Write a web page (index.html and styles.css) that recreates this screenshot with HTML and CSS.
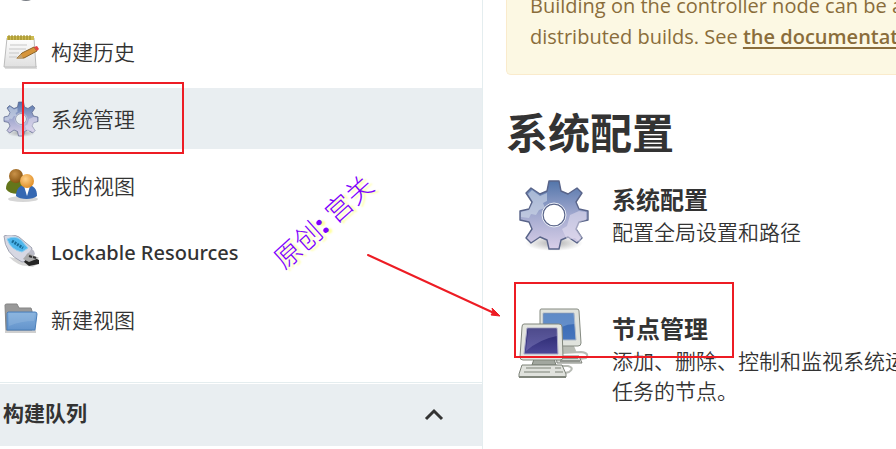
FILE: index.html
```html
<!DOCTYPE html>
<html lang="zh-CN">
<head>
<meta charset="utf-8">
<meta name="viewport" content="width=device-width, initial-scale=1">
<title>系统管理</title>
<link rel="stylesheet" href="styles.css">
</head>
<body>
<svg class="defs" aria-hidden="true">
  <defs>
    <linearGradient id="gearFill" x1="0" y1="0" x2="0" y2="1"><stop offset="0" stop-color="#5275aa"/><stop offset=".5" stop-color="#a2a9cf"/><stop offset="1" stop-color="#d9cfe8"/></linearGradient>
    <linearGradient id="paper" x1="0" y1="0" x2="0" y2="1"><stop offset="0" stop-color="#ffffff"/><stop offset="1" stop-color="#e0e0e0"/></linearGradient>
    <linearGradient id="folderFill" x1="0" y1="0" x2="0" y2="1"><stop offset="0" stop-color="#83b0dd"/><stop offset="1" stop-color="#6494cc"/></linearGradient>
    <linearGradient id="screenDark" x1="0" y1="0" x2="0" y2="1"><stop offset="0" stop-color="#26246a"/><stop offset="1" stop-color="#4b4796"/></linearGradient>
    <linearGradient id="screenBlue" x1="0" y1="0" x2="0" y2="1"><stop offset="0" stop-color="#3567b2"/><stop offset="1" stop-color="#4675bd"/></linearGradient>
    <radialGradient id="brownHead" cx=".4" cy=".35" r=".7"><stop offset="0" stop-color="#c99249"/><stop offset="1" stop-color="#84500e"/></radialGradient>
    <radialGradient id="orangeHead" cx=".4" cy=".35" r=".7"><stop offset="0" stop-color="#ffd28a"/><stop offset="1" stop-color="#df8a20"/></radialGradient>
    <radialGradient id="shade"><stop offset="0" stop-color="#777" stop-opacity=".6"/><stop offset="1" stop-color="#777" stop-opacity="0"/></radialGradient>
    <symbol id="gear" viewBox="0 0 72 72">
      <ellipse cx="36" cy="64" rx="29" ry="8" fill="url(#shade)"/>
      <path d="M31 2h10l2 10 7 3 9-6 5 5-6 9 3 7 9 2v9l-9 2-3 7 6 9-5 5-9-6-7 3-2 9H31l-2-9-7-3-9 6-5-5 6-9-3-7-9-2v-9l9-2 3-7-6-9 5-5 9 6 7-3zM36 25a11 11 0 1 0 0 22 11 11 0 1 0 0-22z" fill="url(#gearFill)" fill-rule="evenodd" stroke="#596489" stroke-width="1.4" stroke-linejoin="round"/>
      <path d="M14 11l8 6 7-3v8l-4 2 2 5-6 2-3 5-5-1-2 4-8-1v-5l8-2 4-8-5-8z" fill="#d1dbea" opacity=".6"/>
      <path d="M68 33l-7-1-9 4-3 11-5 3 5 11 8-2 4 4 3-5-5-7 3-8 6-2z" fill="#e9e4f3" opacity=".5"/>
      <circle cx="36" cy="36" r="12" fill="none" stroke="#e9edf5" stroke-width="1"/>
    </symbol>
  </defs>
</svg>
<div class="layout">
  <aside class="sidebar">
    <nav class="tasks" aria-label="任务">
      <a class="task previous" href="#" aria-label="用户列表"><svg class="icon" viewBox="0 0 36 36"><ellipse cx="23" cy="31" rx="7" ry="3" fill="#777b82"/></svg></a>
      <a class="task" href="#">
        <svg class="icon" viewBox="0 0 36 36"><path d="M2 32h32v3H2z" fill="#aaa" opacity=".4"/><path d="M4 4h27l2 29H1z" fill="url(#paper)" stroke="#bcbcbc"/><path d="M4 2h27v4H4z" fill="#cdbb51"/><path d="M6 1v5m3-5v5m3-5v5m3-5v5m3-5v5m3-5v5m3-5v5m3-5v5" stroke="#958324"/><path d="M7 11h17M6 15h17M6 19h10M6 23h8" stroke="#c7c7c7"/><path d="M14 24l5-5 12-6 3 4-13 7z" fill="#d6953b" stroke="#8b6429"/><path d="M13 25l5-5 2 4z" fill="#c2a06e"/><path d="M31 13l3-1 2 3-2 2z" fill="#e44243"/></svg>
        <span>构建历史</span></a>
      <a class="task active" href="#" aria-current="page"><svg class="icon"><use href="#gear"/></svg><span>系统管理</span></a>
      <a class="task" href="#">
        <svg class="icon" viewBox="0 0 36 36"><ellipse cx="20" cy="31" rx="15" ry="3" fill="#999" opacity=".4"/><path d="M3 21c0-7 4-10 10-10s9 5 9 12c-4 4-15 4-19-2z" fill="#64761b"/><circle cx="13" cy="8" r="7" fill="url(#brownHead)"/><path d="M13 28c0-8 4-11 11-11s10 4 10 11c-4 4-17 4-21 0z" fill="#3568b2"/><path d="M21 18h6l-3 10z" fill="#fff"/><circle cx="24" cy="13" r="7" fill="url(#orangeHead)"/></svg>
        <span>我的视图</span></a>
      <a class="task medium" href="#">
        <svg class="icon" viewBox="0 0 36 36"><path d="M6 22q9 9 18 9l6 1 6-4-8-2z" fill="#bbb" opacity=".6"/><path d="M1 1q7-3 15 1l13 11-4 13-6 1Q2 19 1 1z" fill="#d7d8e3" stroke="#a1a4b2"/><path d="M4 4q8-4 14 1l7 8-6 4Q8 15 4 4z" fill="#4eb6ec" stroke="#8dcff0"/><path d="M9 6l11 7" stroke="#176b98" stroke-width="3" stroke-dasharray="2 1"/><path d="M23 20l6-6q3 2 3 5l-6 8q-4-2-3-7z" fill="#babbc7"/><path d="M26 20l10 5v4l-10 2-5-4z" fill="#252525"/><path d="M25 18l11 5-10 4-6-3z" fill="#aaa"/><path d="M26 21l3 1m1 0l3 1" stroke="#333" stroke-width="2"/></svg>
        <span>Lockable Resources</span></a>
      <a class="task" href="#">
        <svg class="icon" viewBox="0 0 36 36"><path d="M2 28h31v3H2z" fill="#888" opacity=".4"/><path d="M2 3q0-1 2-1h10l2 4h12l1 3v19H3z" fill="#999" stroke="#858585"/><path d="M5 10h27q2 0 2 2l-2 16H4V11z" fill="url(#folderFill)" stroke="#4b7fb9"/><path d="M6 11h26l-1 8q-13 0-25 5z" fill="#a1c3e6" opacity=".3"/></svg>
        <span>新建视图</span></a>
    </nav>
    <section class="queue">
      <h2>构建队列</h2>
      <button type="button" aria-label="折叠"><svg viewBox="0 0 20 14"><path d="M2 11l8-8 8 8" fill="none" stroke="#333" stroke-width="3"/></svg></button>
    </section>
  </aside>
  <main class="content">
    <div class="alert">Building on the controller node can be a<br>distributed builds. See <a href="#">the documentation</a></div>
    <h1>系统配置</h1>
    <div class="options">
      <a class="option" href="#">
        <svg class="large-icon"><use href="#gear"/></svg>
        <span class="description"><strong>系统配置</strong><span>配置全局设置和路径</span></span>
      </a>
      <a class="option" href="#">
        <svg class="large-icon" viewBox="0 0 72 72">
          <path d="M43 45l20-1q9 1 5 6l-7 1M37 58h13q7 2 1 6l-4 1" fill="none" stroke="#b8bbb5" stroke-width="2"/>
          <path d="M38 48h23l3 7H39z" fill="#d7dad5" stroke="#7e827b"/><path d="M42 50h18m-18 3h20" stroke="#92958f" stroke-width="2"/>
          <path d="M42 38h14l3 7H42z" fill="#b8bcb4"/>
          <path d="M23 1h36q2 0 2 2l2 32q0 3-3 3H25q-3 0-3-3V3q0-2 1-2z" fill="#e0e3dd" stroke="#858a81"/>
          <path d="M25 5h31l2 27H25z" fill="url(#screenBlue)" stroke="#aeb9c7"/><path d="M26 6h30l1 10Q42 16 31 29l-5 2z" fill="#9ec1e7" opacity=".4"/>
          <path d="M16 51h20l2 6H14z" fill="#a2a79f" stroke="#777d72"/>
          <path d="M6 16h35q3 0 3 3l1 30q0 3-3 3H5q-3 0-3-3l2-30q0-3 2-3z" fill="#e3e5df" stroke="#82877d"/>
          <path d="M9 20h30l1 26H6z" fill="url(#screenDark)" stroke="#aaa9c7"/><path d="M10 21h28l1 7Q22 31 8 43z" fill="#aaa7da" opacity=".3"/>
          <path d="M4 57h40l4 9v3H1v-3z" fill="#e0e2dd" stroke="#7d8279"/><path d="M8 60h25m4 0h6M6 64h26m5 0h8" stroke="#aeb2aa" stroke-width="2"/><path d="M1 69h47" stroke="#81867c" stroke-width="2"/>
        </svg>
        <span class="description"><strong>节点管理</strong><span>添加、删除、控制和监视系统运<br>任务的节点。</span></span>
      </a>
    </div>
  </main>
</div>
<div class="mark mark-manage"></div>
<div class="mark mark-node"></div>
<svg class="arrow" viewBox="0 0 136 66" aria-hidden="true"><path d="M2 2l126 58" stroke="#ed1c24" stroke-width="2" stroke-linecap="round"/><path d="M134 63l-9-1 2-3-1-4z" fill="#ed1c24" stroke="#ed1c24"/></svg>
<div class="watermark">原创<b>:</b> 宫关</div>
</body>
</html>
```
FILE: styles.css
```css
* { box-sizing: border-box; }
body {
  margin: 0;
  overflow: hidden;
  background: #fff;
  color: #333;
  font: 21px/30px "Open Sans", "Noto Sans CJK SC", sans-serif;
}
a { color: inherit; text-decoration: none; }
.defs { position: absolute; width: 0; height: 0; }
.layout { display: grid; grid-template-columns: 483px minmax(0, 1fr); height: 100vh; overflow: hidden; }
.sidebar { border-right: 1px solid #e4edef; }
.tasks { display: flex; flex-direction: column; gap: 6px; margin-top: -46px; }
.task { display: flex; align-items: center; gap: 12px; height: 61px; padding-left: 3px; font-weight: 350; }
.active { background: #e9eef1; }
.medium { font-family: "Noto Sans", sans-serif; font-size: 20px; font-weight: 500; }
.icon { width: 36px; height: 36px; flex: none; }
.queue {
  display: flex; align-items: center; justify-content: space-between;
  height: 64px; margin-top: 32px; padding: 0 38px 4px 3px;
  border-top: 1px solid #e4edef;
  background: #e9eef1;
  box-shadow: inset 0 1px #fff;
}
h2 { margin: 0; font-size: 21px; font-weight: 700; }
button { display: flex; padding: 4px 0 0; border: 0; background: none; }
button svg { width: 20px; height: 14px; }
.content { padding-left: 23px; white-space: nowrap; }
.alert {
  margin-top: -33px; padding: 22px 0 22px 23px;
  border: 1px solid #faebcc; border-right: 0; border-radius: 5px 0 0 5px;
  background: #fcf8e3; color: #8a6d3b;
  font-size: 20px; line-height: 31px;
}
.alert a { font-weight: 600; text-decoration: underline; text-decoration-thickness: 2px; text-underline-offset: 3px; }
h1 { margin: 28px 0 16px; font-size: 42px; line-height: 60px; font-weight: 700; }
.options { display: grid; gap: 57px; padding-left: 12px; }
.option { display: flex; gap: 22px; }
.large-icon { width: 72px; height: 72px; flex: none; }
.description { display: grid; align-content: start; padding-top: 4px; font-weight: 350; }
.description strong { font-size: 24px; line-height: 34px; font-weight: 700; }
.mark { position: absolute; border: 2px solid #ed1c24; }
.mark-manage { left: 22px; top: 82px; width: 162px; height: 72px; }
.mark-node { left: 514px; top: 282px; width: 220px; height: 76px; }
.arrow { position: absolute; left: 366px; top: 253px; width: 136px; height: 66px; }
.watermark {
  position: absolute; left: 262px; top: 207px;
  color: #7c00ff; text-shadow: 2px 3px 2px #ffff9c;
  font-size: 27px; font-weight: 300; white-space: nowrap;
  transform: rotate(-42deg);
}
.watermark b { font-weight: 800; }
```
